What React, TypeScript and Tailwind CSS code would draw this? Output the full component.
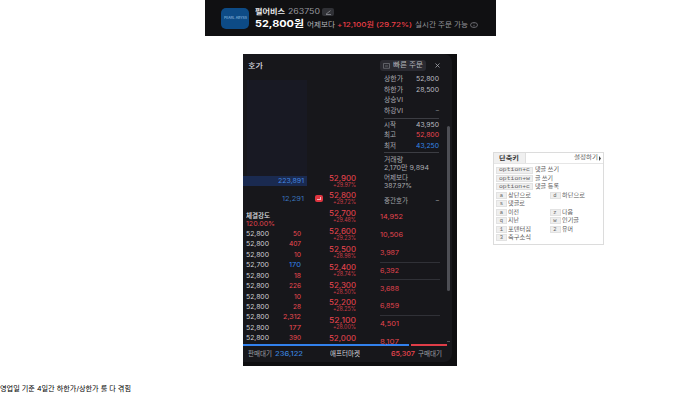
import { useLayoutEffect, useRef, useState } from "react";
import type { ReactNode } from "react";

type FitProps = {
  children: ReactNode;
  className?: string;
};

// Stretches one line of text to the full width of its box
function Fit({ children, className = "" }: FitProps) {
  const box = useRef<HTMLSpanElement>(null);
  const text = useRef<HTMLSpanElement>(null);
  const [scale, setScale] = useState(1);

  useLayoutEffect(() => {
    if (box.current && text.current) {
      setScale(box.current.clientWidth / text.current.getBoundingClientRect().width);
    }
  }, []);

  return (
    <span ref={box} className={`block shrink-0 whitespace-nowrap ${className}`}>
      <span ref={text} className="inline-block origin-left" style={{ transform: `scaleX(${scale})` }}>
        {children}
      </span>
    </span>
  );
}

const trades = [
  { price: "52,800", qty: "50", width: "w-[8px]", tone: "text-[#ee4a52]" },
  { price: "52,800", qty: "407", width: "w-[12px]", tone: "text-[#ee4a52]" },
  { price: "52,800", qty: "10", width: "w-[7px]", tone: "text-[#ee4a52]" },
  { price: "52,700", qty: "170", width: "w-[12px]", tone: "text-[#3485e8]" },
  { price: "52,800", qty: "18", width: "w-[7px]", tone: "text-[#ee4a52]" },
  { price: "52,800", qty: "226", width: "w-[12px]", tone: "text-[#ee4a52]" },
  { price: "52,800", qty: "10", width: "w-[7px]", tone: "text-[#ee4a52]" },
  { price: "52,800", qty: "28", width: "w-[8px]", tone: "text-[#ee4a52]" },
  { price: "52,800", qty: "2,312", width: "w-[18px]", tone: "text-[#ee4a52]" },
  { price: "52,800", qty: "177", width: "w-[12px]", tone: "text-[#ee4a52]" },
  { price: "52,800", qty: "390", width: "w-[12px]", tone: "text-[#ee4a52]" }
];

const quotes = [
  { price: "52,900", rate: "+29.97%" },
  { price: "52,800", rate: "+29.72%" },
  { price: "52,700", rate: "+29.48%" },
  { price: "52,600", rate: "+29.23%" },
  { price: "52,500", rate: "+28.98%" },
  { price: "52,400", rate: "+28.74%" },
  { price: "52,300", rate: "+28.50%" },
  { price: "52,200", rate: "+28.25%" },
  { price: "52,100", rate: "+28.00%" },
  { price: "52,000", rate: "" }
];

const bids = [
  { qty: "14,952", width: "w-[23px]", line: "border-transparent" },
  { qty: "10,506", width: "w-[23px]", line: "border-transparent" },
  { qty: "3,987", width: "w-[19px]", line: "border-[#303137]" },
  { qty: "6,392", width: "w-[19px]", line: "border-[#303137]" },
  { qty: "3,688", width: "w-[19px]", line: "border-transparent" },
  { qty: "6,859", width: "w-[19px]", line: "border-[#303137]" },
  { qty: "4,501", width: "w-[19px]", line: "border-transparent" },
  { qty: "8,107", width: "w-[19px]", line: "border-transparent" }
];

function StockHeader() {
  return (
    <header className="ml-[205px] flex h-9 w-[291px] bg-[#101012] pl-4 pt-2">
      <div className="flex h-[21px] w-7 items-center justify-center rounded-[5px] bg-[#0d4b86] text-[3px] leading-none text-[#9cc3e5]">
        <Fit className="w-[23px]">PEARL ABYSS</Fit>
      </div>
      <div className="ml-1.5 flex flex-col">
        <div className="flex h-2 items-center text-[7px] leading-[8px]">
          <Fit className="w-[30px] font-bold text-[#ececee]">펄어비스</Fit>
          <Fit className="ml-[3px] w-8 text-[#97989e]">263750</Fit>
          <span className="ml-0.5 flex h-2 w-3 items-center justify-center rounded-[2px] bg-[#303136]">
            <svg className="h-[5px] w-[7px]" viewBox="0 0 7 5" fill="none" stroke="#8d8e94" strokeWidth=".8">
              <path d="M1 4.2 5.5.6M1 4.5h5" />
            </svg>
          </span>
        </div>
        <div className="mt-[2px] flex h-[11px] items-center leading-[11px]">
          <Fit className="w-[49px] text-[9.5px] font-bold text-white">52,800원</Fit>
          <div className="flex items-center pt-[3px] text-[6.5px] leading-[9px]">
            <Fit className="ml-[3px] w-7 text-[#b5b6bb]">어제보다</Fit>
            <Fit className="ml-[2px] w-[75px] font-medium text-[#ed3f48]">+12,100원 (29.72%)</Fit>
            <Fit className="ml-[3px] w-[53px] text-[#96979d]">실시간 주문 가능</Fit>
            <svg className="ml-[2px] h-1.5 w-2" viewBox="0 0 8 6" fill="none" stroke="#898a90" strokeWidth=".7">
              <ellipse cx="4" cy="3" rx="3.5" ry="2.5" />
              <path d="M4 2.8v1.6M4 1.5v.5" />
            </svg>
          </div>
        </div>
      </div>
    </header>
  );
}

type InfoRowProps = {
  label: string;
  value?: string;
  width?: string;
  tone?: string;
};

function InfoRow({ label, value, width = "w-[19px]", tone = "text-[#bcbdc2]" }: InfoRowProps) {
  return (
    <div className="flex h-[10.4px] shrink-0 items-center justify-between">
      <Fit className={`${width} text-[#abacb2]`}>{label}</Fit>
      {value === "-" ? <span className="text-[#8b8c92]">–</span> : null}
      {value && value !== "-" ? <Fit className={`w-[23px] ${tone}`}>{value}</Fit> : null}
    </div>
  );
}

function TradeColumn() {
  return (
    <div className="w-16 shrink-0 pt-1.5">
      <div className="ml-1 h-24 bg-[#181923]" />
      <div className="flex h-[10px] items-center justify-end bg-[#1a2a50] pr-[3px] text-[6.5px] leading-none text-[#4387e0]">
        <Fit className="w-[26px]">223,891</Fit>
      </div>
      <div className="mt-2 flex h-[10px] items-center justify-end pr-[3px] text-[6.5px] leading-none text-[#3974bd]">
        <Fit className="w-[22px]">12,291</Fit>
      </div>
      <div className="mt-[7.5px] pl-[3px] text-[6.5px] leading-2">
        <Fit className="w-6 font-medium text-[#e2e3e6]">체결강도</Fit>
        <Fit className="w-[29px] text-[#e0434d]">120.00%</Fit>
      </div>
      <div className="mt-[1.5px] text-[6.5px] leading-none">
        {trades.map((trade, index) => (
          <div key={index} className="flex h-[10.45px] items-center justify-between pl-[3px] pr-1.5">
            <Fit className="w-[23px] text-[#cfd0d4]">{trade.price}</Fit>
            <Fit className={`${trade.width} ${trade.tone}`}>{trade.qty}</Fit>
          </div>
        ))}
      </div>
    </div>
  );
}

function QuoteColumn() {
  return (
    <div className="flex w-[49px] shrink-0 flex-col items-end pt-[100.5px]">
      {quotes.map((quote) => (
        <div key={quote.price} className="flex h-[17.85px] w-full shrink-0 items-start justify-between pl-2">
          {quote.price === "52,800" ? (
            <span className="mt-[3px] flex h-[7px] w-2 items-center justify-center rounded-[2px] bg-[#df3540]">
              <span className="h-[3px] w-1 border-b border-r border-[#f4b6ba]" />
            </span>
          ) : (
            <span />
          )}
          <div className="flex flex-col items-end text-[#ee4650]">
            <Fit className="w-[27px] text-[7.5px] leading-[8px]">{quote.price}</Fit>
            {quote.rate ? <Fit className="w-[23px] text-[5.5px] leading-[5px] text-[#cb3d47]">{quote.rate}</Fit> : null}
          </div>
        </div>
      ))}
    </div>
  );
}

function InfoColumn() {
  return (
    <div className="ml-6 w-[60px] shrink-0">
      <div className="flex h-[135px] flex-col pl-1 pr-px pt-[.5px] text-[6.5px] leading-none">
        <InfoRow label="상한가" value="52,800" />
        <InfoRow label="하한가" value="28,500" />
        <InfoRow label="상승VI" />
        <InfoRow label="하강VI" value="-" />
        <div className="my-[1.5px] h-px shrink-0 bg-[#3c3d43]" />
        <InfoRow label="시작" value="43,950" width="w-3" />
        <InfoRow label="최고" value="52,800" width="w-3" tone="text-[#ee4650]" />
        <InfoRow label="최저" value="43,250" width="w-3" tone="text-[#3485e8]" />
        <div className="mt-[1px] h-px shrink-0 bg-[#3c3d43]" />
        <div className="mt-[3px] leading-2 text-[#a9aab0]">
          <Fit className="w-[19px]">거래량</Fit>
          <Fit className="w-[45px]">2,170만 9,894</Fit>
        </div>
        <div className="mt-[2px] leading-2 text-[#a9aab0]">
          <Fit className="w-6">어제보다</Fit>
          <Fit className="w-7">387.97%</Fit>
        </div>
        <div className="mt-[6px] flex h-[10px] shrink-0 items-center justify-between text-[#a3a4aa]">
          <Fit className="w-6">중간호가</Fit>
          <span>–</span>
        </div>
      </div>
      <div className="text-[6.5px] leading-none text-[#e4454f]">
        {bids.map((bid) => (
          <div key={bid.qty} className={`flex h-[17.85px] items-center border-b ${bid.line}`}>
            <Fit className={bid.width}>{bid.qty}</Fit>
          </div>
        ))}
      </div>
    </div>
  );
}

function OrderBook() {
  return (
    <section className="h-[312px] w-[214px] shrink-0 bg-[#0e0e10]">
      <div className="flex h-[308px] w-[209px] flex-col overflow-hidden rounded-r-lg bg-[#17171b]">
        <div className="flex h-5 shrink-0 items-start pl-[5px] pt-1.5 text-[7px] leading-none">
          <Fit className="mt-[2px] w-[15px] font-medium text-[#dedfe3]">호가</Fit>
          <div className="ml-[117px] flex h-[11px] w-[46px] items-center rounded-[3px] bg-[#2a2a31] pl-[3px] text-[6.5px] text-[#b5b6bc]">
            <svg className="mr-[3px] h-1.5 w-[7px]" viewBox="0 0 7 6" fill="none" stroke="#777880" strokeWidth=".7">
              <path d="M.5.5h6v4.8h-6zM2 3h3" />
            </svg>
            <Fit className="w-[30px]">빠른 주문</Fit>
          </div>
          <svg className="ml-[9px] mt-[3px] h-[5px] w-[5px]" viewBox="0 0 5 5" stroke="#a5a6ac" strokeWidth=".8">
            <path d="m.5.5 4 4m0-4-4 4" />
          </svg>
        </div>
        <div className="flex h-[270px] shrink-0">
          <TradeColumn />
          <QuoteColumn />
          <InfoColumn />
          <div className="ml-[7px] flex w-1 flex-col pt-[52px]">
            <div className="h-[165px] w-[3px] rounded-full bg-[#4e4f55]" />
            <div className="mt-[50px] h-px w-[3px] bg-[#55565c]" />
          </div>
        </div>
        <div className="flex h-[2px] shrink-0 gap-[2px]">
          <div className="w-[166px] bg-[#3281ed]" />
          <div className="w-9 bg-[#df3d48]" />
        </div>
        <div className="flex h-4 items-center pl-[5px] text-[6.5px] leading-none text-[#a0a1a7]">
          <Fit className="w-6">판매대기</Fit>
          <Fit className="ml-[3px] w-7 font-medium text-[#3982de]">236,122</Fit>
          <Fit className="ml-[27px] w-[30px] text-[#d6d7db]">애프터마켓</Fit>
          <Fit className="ml-[31px] w-6 font-medium text-[#ee4650]">65,307</Fit>
          <Fit className="ml-[3px] w-6">구매대기</Fit>
        </div>
      </div>
    </section>
  );
}

function Key({ name, wide = false }: { name: string; wide?: boolean }) {
  return (
    <span className={`flex h-[7px] shrink-0 items-center justify-center border border-[#e2e2e2] bg-[#efefef] font-['Liberation_Mono',monospace] text-[5.5px] leading-none text-[#666] ${wide ? "w-[37px]" : "w-[11px]"}`}>
      {wide ? <Fit className="w-[31px]">{name}</Fit> : name}
    </span>
  );
}

const shortcuts = [
  { keys: ["a", "d"], labels: ["상단으로", "하단으로"], widths: ["w-[23px]", "w-[23px]"] },
  { keys: ["s"], labels: ["댓글로"], widths: ["w-[17px]"] },
  { keys: ["a", "z"], labels: ["이전", "다음"], widths: ["w-[11px]", "w-[11px]"] },
  { keys: ["q", "w"], labels: ["지난", "인기글"], widths: ["w-[11px]", "w-[17px]"] },
  { keys: ["1", "2"], labels: ["포텐터짐", "유머"], widths: ["w-[23px]", "w-[11px]"] },
  { keys: ["3"], labels: ["축구소식"], widths: ["w-[23px]"] }
];

function ShortcutBox() {
  return (
    <aside className="ml-9 mt-[98px] h-[93px] w-[111px] shrink-0 border border-[#dcdcdc] bg-white text-[5.5px] leading-none text-[#555]">
      <div className="flex h-[11px] items-center justify-between border-b border-[#e6e6e6] pr-[2px]">
        <div className="flex h-[10px] w-8 items-center border-r border-[#dfdfdf] bg-[#f0f0f0] pl-[5px] text-[6px] font-bold text-[#333]">
          <Fit className="w-5">단축키</Fit>
        </div>
        <div className="flex items-center gap-px">
          <Fit className="w-6">설정하기</Fit>
          <svg className="h-[5px] w-[2px]" viewBox="0 0 2 5" fill="#444">
            <path d="M0 0v5l2-2.5z" />
          </svg>
        </div>
      </div>
      <div className="pl-[2px] pt-[2px]">
        <div className="flex h-[8.4px] items-center gap-[2px]">
          <Key name="option+c" wide />
          <Fit className="w-[24px]">댓글 쓰기</Fit>
        </div>
        <div className="flex h-[8.4px] items-center gap-[2px]">
          <Key name="option+w" wide />
          <Fit className="w-[18px]">글 쓰기</Fit>
        </div>
        <div className="flex h-[8.4px] items-center gap-[2px]">
          <Key name="option+c" wide />
          <Fit className="w-6">댓글 등록</Fit>
        </div>
        {shortcuts.map((row) => (
          <div key={row.labels[0]} className="flex h-[8.5px] items-center">
            {row.keys.map((key, index) => (
              <div key={key} className="flex w-[55px] items-center gap-px">
                <Key name={key} />
                <Fit className={row.widths[index]}>{row.labels[index]}</Fit>
              </div>
            ))}
          </div>
        ))}
      </div>
    </aside>
  );
}

export default function App() {
  return (
    <main className="h-[400px] w-[700px] overflow-hidden bg-white font-[Inter,'Noto_Sans_CJK_KR',sans-serif]">
      <StockHeader />
      <div className="ml-[243px] mt-[18px] flex items-start">
        <OrderBook />
        <ShortcutBox />
      </div>
      <p className="mt-[19px] text-[6.5px] leading-2 text-black">
        <Fit className="w-[131px]">영업일 기준 4일간 하한가/상한가 룰 다 겪힘</Fit>
      </p>
    </main>
  );
}
